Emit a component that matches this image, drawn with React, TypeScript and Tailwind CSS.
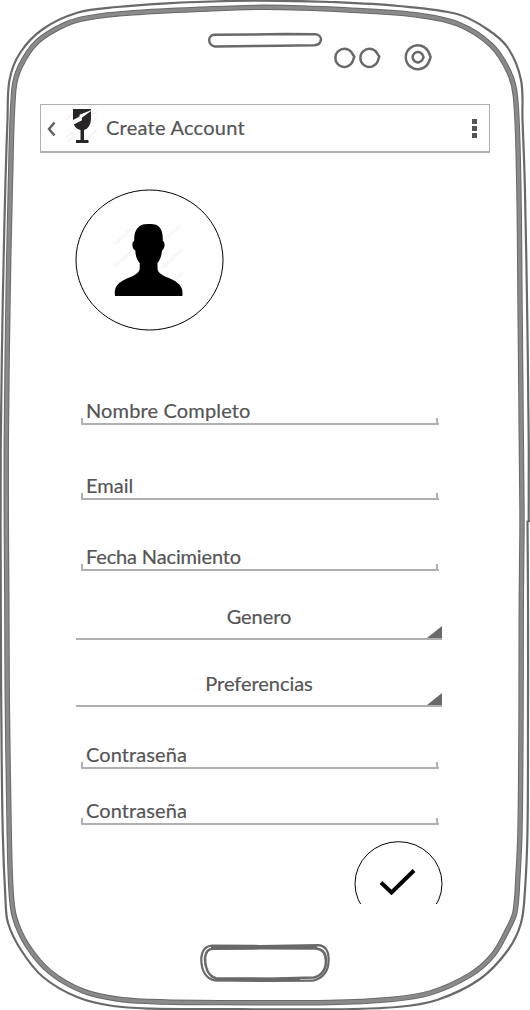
import type { ReactNode } from "react";

type Point = [number, number];

const OUTER: Point[] = [
  [0.6, 520], [0.8, 440], [2.8, 300], [5.5, 180], [7.5, 120], [9.5, 80], [20, 53], [43, 29], [78, 12.5], [117, 7], [167, 3.3], [230, 1], [280, 0.8],
  [331, 2], [398, 6], [457, 14], [487, 29], [508, 48], [521, 80], [522.5, 120], [524.7, 180], [527, 300], [528.7, 440], [528.7, 522],
];
const OUTER_LOWER: Point[] = [
  [527.5, 521], [528, 600], [528, 720], [527.5, 830], [525, 890], [521, 923], [508, 950], [480, 979], [437, 1000], [397, 1007], [330, 1009.3], [200, 1009],
  [153, 1008.7], [113, 1006], [77, 997], [43, 977], [21, 950], [8, 923], [5.5, 900], [2.7, 830], [1.2, 700], [0.8, 600], [0.6, 520],
];
const INNER: Point[] = [
  [6.3, 520], [6.3, 440], [8, 300], [10.5, 180], [13.8, 90], [20, 67], [37, 42], [65, 24.5], [88, 17.8], [133, 12.8], [200, 9.3], [265, 7.3],
  [348, 10], [415, 14.7], [458, 24], [491, 45], [509, 72], [515.5, 97], [518.7, 180], [520, 300], [521.3, 440], [522, 522], [521.3, 600], [521, 720],
  [520, 830], [518, 875], [515, 912], [508, 929], [493, 955], [470, 975], [430, 993], [390, 999.5], [330, 1002.5], [200, 1002.5], [150, 1001.5],
  [117, 999], [83, 991], [50, 972], [27, 945], [14.5, 917], [11, 890], [9.2, 830], [7.3, 700], [6.8, 600], [6.3, 520],
];

function spline(points: Point[]): string {
  let d = `M${points[0][0]} ${points[0][1]}`;
  for (let i = 0; i < points.length - 1; i++) {
    const before = points[Math.max(i - 1, 0)];
    const a = points[i];
    const b = points[i + 1];
    const after = points[Math.min(i + 2, points.length - 1)];
    // Tangents are scaled to the segment so that long straight sides do not overshoot.
    const len = Math.hypot(b[0] - a[0], b[1] - a[1]);
    const ta = Math.hypot(b[0] - before[0], b[1] - before[1]) || 1;
    const tb = Math.hypot(after[0] - a[0], after[1] - a[1]) || 1;
    const k = len / 3;
    d += `C${a[0] + ((b[0] - before[0]) / ta) * k} ${a[1] + ((b[1] - before[1]) / ta) * k} ${b[0] - ((after[0] - a[0]) / tb) * k} ${b[1] - ((after[1] - a[1]) / tb) * k} ${b[0]} ${b[1]}`;
  }
  return d;
}

function PhoneFrame() {
  return (
    <svg className="pointer-events-none absolute inset-0" width="530" height="1010" viewBox="0 0 530 1010" fill="none" stroke="#696969" strokeWidth="2.2">
      <path d={spline(OUTER)} />
      <path d={spline(OUTER_LOWER)} />
      <path d={spline(INNER)} strokeWidth="5.4" />
      <path d={spline(INNER)} stroke="#8a8a8a" strokeWidth="3.4" />
      <path d="M527.5 521H530" />
      <path d="M215 34.7 252 34.5 285 34 315 34.3C319 34.5 321 37 321 39.5 320.5 43 318 45 314.5 45.3L280 45.7 215 46.5C211 46 209 43 209.2 39.5 209.5 36.5 212 34.5 215 34.7Z" strokeWidth="2.4" />
      <g strokeWidth="2.5" strokeLinejoin="round">
        <path d="M352.5 54A9 9 0 1 0 353 60.5L354.3 56.5Z" />
        <path d="M377.5 54A9 9 0 1 0 378 60.5L379.3 56.5Z" />
        <path d="M429 53A12 12 0 1 0 429 61.5L430.6 57 429 53Z" />
        <path d="M422.3 54.5A5.2 5.2 0 1 0 422.5 59.5L423.6 57Z" />
      </g>
      <path d="M212 945.5 260 946 319 945.2C325 946 329 951 328.6 959 329 971 323 978 313 980.7L270 981 215 980.5C205 979 201 969 201.3 958 202 950 206 946 212 945.5Z" />
      <path d="M213 948.8 260 948.3 316 948.5C322 949 326 953 326 961 326 970 321 976 314 977.5L270 978.8 216 978.3C208 976 205 967 205 958 205.5 952 208 949 213 948.8Z" strokeWidth="2.6" />
      <path d="M211 947 317 946.8M215 979.7 300 979" strokeWidth="3" />
    </svg>
  );
}

function Header() {
  return (
    <header className="flex h-[49px] w-[450px] items-center border border-b-2 border-[#b0b0b0] text-[#555]">
      <svg width="65" height="46" viewBox="0 0 65 46" className="shrink-0">
        <path d="M13.5 17.5 8 24 13.5 30.5" fill="none" stroke="#606060" strokeWidth="2.4" />
        <g stroke="#f5f5f5" strokeWidth="2.2">
          <path d="M25 15 34 7M25 33 56 6M27 36 56 13M43 36 56 25" />
        </g>
        <path d="M32 4H50V5.2L38.5 9.8 38.6 11.6 32 15Z" fill="#292526" />
        <path d="M50 6V13C50 20 47 24 43 25V35H47.5V38H35V35H39.5V25C36 24.2 33.5 21.5 32.8 19.4L41 15.2 40.8 12.8Z" fill="#292526" />
      </svg>
      <h1 className="-mt-[3px] text-[20px] leading-6 tracking-[0.25px]">Create Account</h1>
      <div className="mr-[12px] ml-auto flex flex-col gap-[2px]">
        <i className="size-[5px] bg-[#555]" />
        <i className="size-[5px] bg-[#555]" />
        <i className="size-[5px] bg-[#555]" />
      </div>
    </header>
  );
}

function Avatar() {
  return (
    <svg width="150" height="142" viewBox="75 189 150 142" className="mt-9 ml-[35px] block">
      <ellipse cx="149.5" cy="260" rx="73.5" ry="70" fill="#fff" stroke="#000" />
      <g stroke="#f8f8f8" strokeWidth="3.5">
        <path d="M115 244 133 227M115 266 137 247M160 243 180 226M162 268 183 249M172 282 183 272" />
      </g>
      <path d="M143 224.6C146 223.8 153.5 223.8 156 224.8 161.5 227 163 233 162.8 241 165.5 242 165 249 162 250.5 161.5 256 160 260 157.5 263V269C158 275 168 277 174 280.5 181 284.5 183.3 289 182.3 296H115C114 289 116 284.5 123 280.5 129 277 139 275 139.7 269V263C137 260 135.5 256 135.3 250.5 132 249 131.3 242 134.2 241 134 233 136 227 143 224.6Z" fill="#000" />
    </svg>
  );
}

function Field({ className, children }: { className: string; children: ReactNode }) {
  return (
    <div className={`ml-[41px] flex h-[30px] w-[358px] flex-col justify-end ${className}`}>
      <div className="pl-[5px] leading-6">{children}</div>
      <div className="-mt-[4px] h-[7px] border-b-2 border-[#b0b0b0]">
        <div className="mr-px h-[5px] border-r-2 border-l-2 border-[#b0b0b0]" />
      </div>
    </div>
  );
}

function Picker({ className, children }: { className: string; children: ReactNode }) {
  return (
    <div className={`ml-[36px] flex h-[36px] w-[366px] flex-col justify-between ${className}`}>
      <div className="text-center leading-6 tracking-[-0.05px]">{children}</div>
      <div className="flex justify-end border-b-2 border-[#b0b0b0]">
        <svg width="15" height="12" viewBox="0 0 15 12" className="-mt-3 block">
          <path d="M0 12 15 0V12Z" fill="#696969" />
        </svg>
      </div>
    </div>
  );
}

export default function App() {
  return (
    <div className="relative h-[1010px] w-[530px] overflow-hidden bg-white font-['Lato',sans-serif] text-[20px] text-[#555] [-webkit-text-stroke:0.2px_#555]">
      <PhoneFrame />
      <main className="flex h-[904px] flex-col overflow-hidden pt-[104px] pl-[40px]">
        <Header />
        <Avatar />
        <Field className="mt-[64px] tracking-[0.15px]">Nombre Completo</Field>
        <Field className="mt-[45px]">Email</Field>
        <Field className="mt-[41px] tracking-[-0.15px]">Fecha Nacimiento</Field>
        <Picker className="mt-[33px]">Genero</Picker>
        <Picker className="mt-[31px]">Preferencias</Picker>
        <Field className="mt-[32px] tracking-[0.1px]">Contraseña</Field>
        <Field className="mt-[26px] tracking-[0.1px]">Contraseña</Field>
        <svg width="90" height="63" viewBox="354 841 90 63" className="mt-4 ml-[314px] block shrink-0">
          <ellipse cx="398.5" cy="883.7" rx="43.5" ry="42" fill="#fff" stroke="#000" />
          <path d="M381 882.5 391.5 892.5 414 870.5" fill="none" stroke="#000" strokeWidth="4" />
        </svg>
      </main>
    </div>
  );
}
